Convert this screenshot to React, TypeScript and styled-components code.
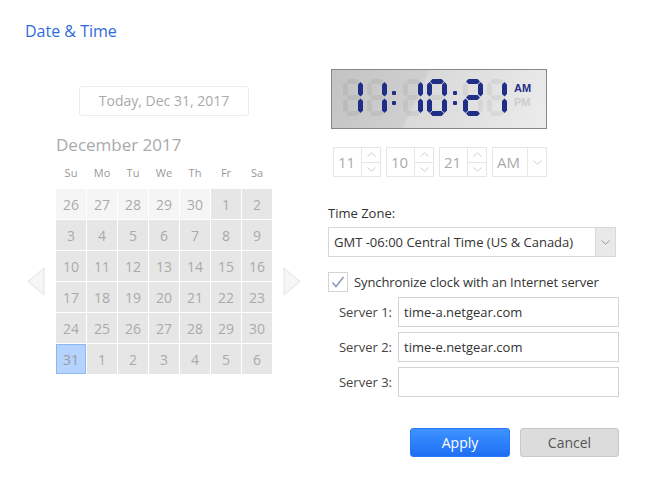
import React from "react";
import styled, { createGlobalStyle } from "styled-components";

const GlobalStyle = createGlobalStyle`
  html, body {
    margin: 0;
    padding: 0;
    background: #fff;
  }
  body {
    font-family: "Open Sans", "Noto Sans", sans-serif;
    color: #333;
  }
`;

const Page = styled.div`
  width: 645px;
  height: 484px;
  padding-top: 20px;
  box-sizing: border-box;
`;

const Title = styled.h1`
  margin: 0 0 0 25px;
  font-size: 16px;
  line-height: 22px;
  font-weight: 400;
  color: #2f6ae0;
`;

const Content = styled.div`
  display: flex;
  margin-top: 27px;
  padding-left: 27px;
  gap: 27px;
`;

const LeftCol = styled.div`
  width: 274px;
  padding-top: 17px;
`;

const RightCol = styled.div`
  width: 292px;
  display: flex;
  flex-direction: column;
`;

const TodayButton = styled.div`
  width: 170px;
  height: 30px;
  margin: 0 auto;
  box-sizing: border-box;
  border: 1px solid #ececec;
  border-radius: 3px;
  font-size: 14px;
  line-height: 28px;
  text-align: center;
  color: #aaa;
`;

const CalendarLayout = styled.div`
  display: grid;
  grid-template-columns: 18px 216px 18px;
  column-gap: 11px;
  margin-top: 17px;
`;

const MonthTitle = styled.div`
  grid-column: 2;
  font-size: 17px;
  line-height: 24px;
  color: #aaa;
`;

const Weekdays = styled.div`
  grid-column: 2;
  display: grid;
  grid-template-columns: repeat(7, 30px);
  column-gap: 1px;
  margin-top: 8px;
  font-size: 11px;
  line-height: 16px;
  color: #999;
  text-align: center;
`;

const DayGrid = styled.div`
  grid-column: 2;
  grid-row: 3;
  display: grid;
  grid-template-columns: repeat(7, 30px);
  grid-auto-rows: 30px;
  gap: 1px;
  margin-top: 8px;
`;

const DayCell = styled.div<{ $muted?: boolean; $selected?: boolean }>`
  box-sizing: border-box;
  display: flex;
  align-items: center;
  justify-content: center;
  font-size: 14px;
  color: ${(p) => (p.$selected ? "#9a9a9a" : "#aaa")};
  background: ${(p) => (p.$selected ? "#b5d3ff" : p.$muted ? "#f5f5f5" : "#e6e6e6")};
  border: ${(p) => (p.$selected ? "1px solid #8db6f5" : "none")};
`;

const NavArrow = styled.svg<{ $col: number }>`
  grid-row: 3;
  grid-column: ${(p) => p.$col};
  align-self: center;
  margin-top: 8px;
`;

const Lcd = styled.div`
  margin-left: 3px;
  width: 216px;
  height: 60px;
  box-sizing: border-box;
  border: 1px solid #878787;
  background: linear-gradient(115deg, #c3c3c3 0%, #cfcfcf 40%, #d9d9d9 41%, #e2e2e2 70%, #ececec 100%);
`;

const SpinnerRow = styled.div`
  display: flex;
  gap: 5px;
  margin: 18px 0 0 5px;
`;

const Spinner = styled.div<{ $width: number }>`
  width: ${(p) => p.$width}px;
  height: 30px;
  box-sizing: border-box;
  border: 1px solid #e6e6e6;
  display: flex;
`;

const SpinValue = styled.div`
  flex: 1;
  padding-left: 4px;
  font-size: 15px;
  line-height: 28px;
  color: #aaa;
`;

const SpinButtons = styled.div`
  width: 18px;
  border-left: 1px solid #e6e6e6;
  display: flex;
  flex-direction: column;
`;

const SpinButton = styled.div<{ $top?: boolean }>`
  flex: 1;
  display: flex;
  align-items: center;
  justify-content: center;
  border-bottom: ${(p) => (p.$top ? "1px solid #e6e6e6" : "none")};
`;

const FieldLabel = styled.div`
  margin-top: 27px;
  font-size: 13px;
  line-height: 18px;
  color: #333;
`;

const Select = styled.div`
  margin-top: 5px;
  width: 288px;
  height: 30px;
  box-sizing: border-box;
  border: 1px solid #d8d8d8;
  display: flex;
`;

const SelectText = styled.div`
  flex: 1;
  padding-left: 5px;
  font-size: 13px;
  line-height: 28px;
  color: #333;
  white-space: nowrap;
`;

const SelectArrow = styled.div`
  width: 19px;
  background: #e9e9e9;
  border-left: 1px solid #d8d8d8;
  display: flex;
  align-items: center;
  justify-content: center;
`;

const CheckRow = styled.div`
  margin-top: 15px;
  display: flex;
  align-items: center;
  gap: 6px;
`;

const CheckBox = styled.div`
  width: 20px;
  height: 20px;
  box-sizing: border-box;
  border: 1px solid #d4d4d4;
  display: flex;
  align-items: center;
  justify-content: center;
`;

const CheckLabel = styled.span`
  font-size: 13px;
  line-height: 20px;
  color: #333;
  letter-spacing: -0.1px;
`;

const ServerList = styled.div`
  margin-top: 5px;
  display: flex;
  flex-direction: column;
  gap: 5px;
`;

const ServerRow = styled.div`
  display: flex;
  align-items: center;
  gap: 6px;
`;

const ServerLabel = styled.div`
  width: 64px;
  text-align: right;
  font-size: 13px;
  color: #444;
`;

const ServerInput = styled.div`
  width: 221px;
  height: 30px;
  box-sizing: border-box;
  border: 1px solid #d4d4d4;
  padding-left: 5px;
  font-size: 13px;
  line-height: 28px;
  color: #333;
`;

const ButtonRow = styled.div`
  margin-top: 31px;
  width: 291px;
  display: flex;
  justify-content: flex-end;
  gap: 10px;
`;

const Button = styled.div<{ $primary?: boolean }>`
  width: ${(p) => (p.$primary ? 100 : 99)}px;
  height: 29px;
  box-sizing: border-box;
  border-radius: 3px;
  border: 1px solid ${(p) => (p.$primary ? "#2a78f4" : "#c8c8c8")};
  background: ${(p) => (p.$primary ? "linear-gradient(#3e93ff, #1f6ef3)" : "#dcdcdc")};
  color: ${(p) => (p.$primary ? "#fff" : "#555")};
  font-size: 14px;
  line-height: 27px;
  text-align: center;
`;

const SEG_ON: Record<string, string> = { "0": "abcdef", "1": "bc", "2": "abdeg" };
const DW = 20;
const DH = 37;
const T = 5;

const hSeg = (x1: number, x2: number, cy: number) =>
  `${x1},${cy} ${x1 + T / 2},${cy - T / 2} ${x2 - T / 2},${cy - T / 2} ${x2},${cy} ${x2 - T / 2},${cy + T / 2} ${x1 + T / 2},${cy + T / 2}`;
const vSeg = (cx: number, y1: number, y2: number) =>
  `${cx},${y1} ${cx + T / 2},${y1 + T / 2} ${cx + T / 2},${y2 - T / 2} ${cx},${y2} ${cx - T / 2},${y2 - T / 2} ${cx - T / 2},${y1 + T / 2}`;

const MID = DH / 2;
const SEGS: Record<string, string> = {
  a: hSeg(3, DW - 3, 2.5),
  b: vSeg(DW - 2.5, 3, MID - 1),
  c: vSeg(DW - 2.5, MID + 1, DH - 3),
  d: hSeg(3, DW - 3, DH - 2.5),
  e: vSeg(2.5, MID + 1, DH - 3),
  f: vSeg(2.5, 3, MID - 1),
  g: hSeg(3, DW - 3, MID),
};

const LIT = "#1f2f88";
const GHOST = "rgba(0,0,0,0.05)";

const Digit = ({ x, value }: { x: number; value: string }) => (
  <g transform={`translate(${x} 9)`}>
    {Object.keys(SEGS).map((k) => (
      <polygon key={k} points={SEGS[k]} fill={SEG_ON[value].includes(k) ? LIT : GHOST} />
    ))}
  </g>
);

const Colon = ({ x }: { x: number }) => (
  <g fill={LIT}>
    <rect x={x - 2} y={21} width={4} height={4} rx={1} />
    <rect x={x - 2} y={31} width={4} height={4} rx={1} />
  </g>
);

const LcdClock = () => (
  <Lcd>
    <svg width="214" height="58" viewBox="0 0 214 58">
      <Digit x={11} value="1" />
      <Digit x={35} value="1" />
      <Colon x={62} />
      <Digit x={71} value="1" />
      <Digit x={95} value="0" />
      <Colon x={123} />
      <Digit x={131} value="2" />
      <Digit x={155} value="1" />
      <text x="182" y="22" fontFamily="Liberation Sans, Arial, sans-serif" fontWeight="700" fontSize="11" fill={LIT}>
        AM
      </text>
      <text x="182" y="36" fontFamily="Liberation Sans, Arial, sans-serif" fontWeight="700" fontSize="11" fill="#cdcdcd">
        PM
      </text>
    </svg>
  </Lcd>
);

const Chevron = ({ up, color = "#cdcdcd" }: { up?: boolean; color?: string }) => (
  <svg width="9" height="5" viewBox="0 0 9 5">
    <polyline
      points={up ? "0.5,4.5 4.5,0.8 8.5,4.5" : "0.5,0.5 4.5,4.2 8.5,0.5"}
      fill="none"
      stroke={color}
      strokeWidth="1"
    />
  </svg>
);

const NumberSpinner = ({ value }: { value: string }) => (
  <Spinner $width={48}>
    <SpinValue>{value}</SpinValue>
    <SpinButtons>
      <SpinButton $top>
        <Chevron up />
      </SpinButton>
      <SpinButton>
        <Chevron />
      </SpinButton>
    </SpinButtons>
  </Spinner>
);

const weekdays = ["Su", "Mo", "Tu", "We", "Th", "Fr", "Sa"];

type Day = { n: number; muted?: boolean; selected?: boolean };

const days: Day[] = [
  ...[26, 27, 28, 29, 30].map((n) => ({ n, muted: true })),
  ...Array.from({ length: 30 }, (_, i) => ({ n: i + 1 })),
  { n: 31, selected: true },
  ...[1, 2, 3, 4, 5, 6].map((n) => ({ n })),
];

const Arrow = ({ left, col }: { left?: boolean; col: number }) => (
  <NavArrow $col={col} width="18" height="29" viewBox="0 0 18 29">
    <polygon
      points={left ? "17,1 17,28 1,14.5" : "1,1 1,28 17,14.5"}
      fill="#f6f6f6"
      stroke="#e2e2e2"
      strokeWidth="1"
      strokeLinejoin="round"
    />
  </NavArrow>
);

export default function App() {
  return (
    <Page>
      <GlobalStyle />
      <Title>Date &amp; Time</Title>
      <Content>
        <LeftCol>
          <TodayButton>Today, Dec 31, 2017</TodayButton>
          <CalendarLayout>
            <MonthTitle>December 2017</MonthTitle>
            <Weekdays>
              {weekdays.map((d) => (
                <span key={d}>{d}</span>
              ))}
            </Weekdays>
            <Arrow left col={1} />
            <DayGrid>
              {days.map((d, i) => (
                <DayCell key={i} $muted={d.muted} $selected={d.selected}>
                  {d.n}
                </DayCell>
              ))}
            </DayGrid>
            <Arrow col={3} />
          </CalendarLayout>
        </LeftCol>
        <RightCol>
          <LcdClock />
          <SpinnerRow>
            <NumberSpinner value="11" />
            <NumberSpinner value="10" />
            <NumberSpinner value="21" />
            <Spinner $width={55}>
              <SpinValue>AM</SpinValue>
              <SpinButtons>
                <SpinButton>
                  <Chevron />
                </SpinButton>
              </SpinButtons>
            </Spinner>
          </SpinnerRow>
          <FieldLabel>Time Zone:</FieldLabel>
          <Select>
            <SelectText>GMT -06:00 Central Time (US &amp; Canada)</SelectText>
            <SelectArrow>
              <Chevron color="#999" />
            </SelectArrow>
          </Select>
          <CheckRow>
            <CheckBox>
              <svg width="14" height="12" viewBox="0 0 14 12">
                <polyline points="1.5,6.5 5,10.5 12.5,1" fill="none" stroke="#8a9bbd" strokeWidth="1.6" />
              </svg>
            </CheckBox>
            <CheckLabel>Synchronize clock with an Internet server</CheckLabel>
          </CheckRow>
          <ServerList>
            <ServerRow>
              <ServerLabel>Server 1:</ServerLabel>
              <ServerInput>time-a.netgear.com</ServerInput>
            </ServerRow>
            <ServerRow>
              <ServerLabel>Server 2:</ServerLabel>
              <ServerInput>time-e.netgear.com</ServerInput>
            </ServerRow>
            <ServerRow>
              <ServerLabel>Server 3:</ServerLabel>
              <ServerInput />
            </ServerRow>
          </ServerList>
          <ButtonRow>
            <Button $primary>Apply</Button>
            <Button>Cancel</Button>
          </ButtonRow>
        </RightCol>
      </Content>
    </Page>
  );
}
